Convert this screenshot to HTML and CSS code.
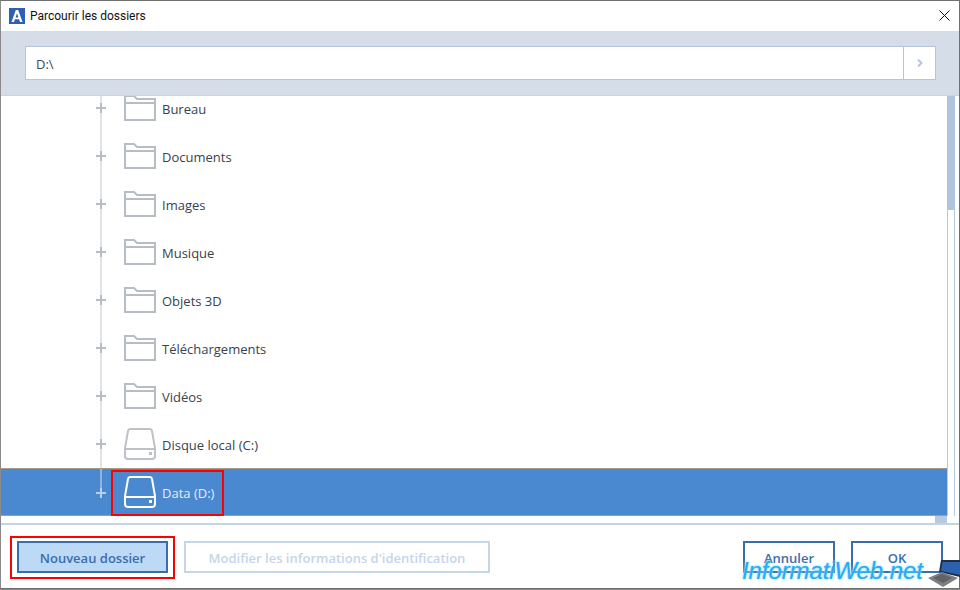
FILE: index.html
```html
<!DOCTYPE html>
<html lang="fr">
<head>
<meta charset="utf-8">
<title>Parcourir les dossiers</title>
<link rel="stylesheet" href="styles.css">
</head>
<body>
<svg class="defs" width="0" height="0" aria-hidden="true">
  <symbol id="folder" viewBox="0 0 32 26">
    <path d="M1 25V1H10L13 4H31V25ZM1 8H31" fill="none" stroke="currentColor" stroke-width="2"/>
  </symbol>
  <symbol id="drive" viewBox="0 0 32 32">
    <path d="M6.500 1H25.500Q27.500 1 28 3L31 20V28Q31 31 28 31H4Q1 31 1 28V20L4 3Q4.500 1 6.500 1ZM1 21H31" fill="none" stroke="currentColor" stroke-width="2"/>
    <rect x="25" y="24" width="3" height="3" fill="currentColor"/>
  </symbol>
</svg>
<div class="window">
  <header class="titlebar">
    <svg class="logo" viewBox="0 0 16 16" aria-hidden="true">
      <rect width="16" height="16" fill="#2d5fb4"/>
      <path d="M2.500 14L6.800 2H9.200L13.500 14H11L10.100 11.300H5.900L5 14ZM6.600 9.400H9.400L8 5.300Z" fill="#fff"/>
    </svg>
    <span class="title">Parcourir les dossiers</span>
    <svg class="close" viewBox="0 0 11 11" aria-hidden="true">
      <path d="M.5.500L10.500 10.500M10.500.500L.5 10.500" stroke="#111" stroke-width="1" fill="none"/>
    </svg>
  </header>
  <div class="pathband">
    <div class="pathbox">
      <span class="pathtext">D:\</span>
      <span class="pathgo">
        <svg viewBox="0 0 6 8" width="6" height="8" aria-hidden="true"><path d="M1 .5L4.500 4L1 7.500" fill="none" stroke="#b5c5dc" stroke-width="2"/></svg>
      </span>
    </div>
  </div>
  <div class="treearea">
    <div class="tree">
      <ul class="rows">
        <li class="row"><span class="plus"></span><svg class="ico folder"><use href="#folder"/></svg><span class="label">Bureau</span></li>
        <li class="row"><span class="plus"></span><svg class="ico folder"><use href="#folder"/></svg><span class="label">Documents</span></li>
        <li class="row"><span class="plus"></span><svg class="ico folder"><use href="#folder"/></svg><span class="label">Images</span></li>
        <li class="row"><span class="plus"></span><svg class="ico folder"><use href="#folder"/></svg><span class="label">Musique</span></li>
        <li class="row"><span class="plus"></span><svg class="ico folder"><use href="#folder"/></svg><span class="label">Objets 3D</span></li>
        <li class="row"><span class="plus"></span><svg class="ico folder"><use href="#folder"/></svg><span class="label">Téléchargements</span></li>
        <li class="row"><span class="plus"></span><svg class="ico folder"><use href="#folder"/></svg><span class="label">Vidéos</span></li>
        <li class="row"><span class="plus"></span><svg class="ico drive"><use href="#drive"/></svg><span class="label">Disque local (C:)</span></li>
        <li class="row selected"><span class="plus"></span><svg class="ico drive"><use href="#drive"/></svg><span class="label">Data (D:)</span><span class="redframe dataframe"></span></li>
      </ul>
    </div>
    <div class="vscroll"><div class="vthumb"></div></div>
  </div>
  <div class="hscroll"><div class="hthumb"></div></div>
  <footer class="footer">
    <button class="btn primary" type="button">Nouveau dossier<span class="redframe newframe"></span></button>
    <button class="btn disabled" type="button">Modifier les informations d'identification</button>
    <span class="spacer"></span>
    <button class="btn plain" type="button">Annuler</button>
    <button class="btn plain" type="button">OK</button>
  </footer>
</div>
<div class="bottomstrip"></div>
<div class="watermark">InformatiWeb.net</div>
<svg class="laptop" viewBox="0 0 32 30" aria-hidden="true">
  <path d="M13 1H32V18L11 13Z" fill="#1f2c44"/>
  <path d="M14.500 3H32V16L13 12Z" fill="#2a62b0"/>
  <path d="M0 19L14 13L30 19L15 28Z" fill="#7d7f82"/>
  <path d="M5 19L14 15L24 19L15 24Z" fill="#606265"/>
</svg>
</body>
</html>
```
FILE: styles.css
```css
html, body {
  margin: 0;
  padding: 0;
  height: 590px;
  overflow: hidden;
  background: #fff;
}
body {
  position: relative;
  font-family: "Open Sans", "Noto Sans", sans-serif;
  color: #3b4656;
}
.defs { position: absolute; }
.window {
  box-sizing: border-box;
  width: 960px;
  height: 589px;
  display: flex;
  flex-direction: column;
  background: #fff;
  border-top: 1px solid #6f6f6f;
  border-left: 1px solid #8a8a8a;
  border-right: 1px solid #6f6f6f;
  border-bottom: 1px solid #6f6f6f;
}
.titlebar {
  height: 30px;
  flex: none;
  display: flex;
  align-items: center;
  padding: 0 9px 0 8px;
}
.logo { width: 16px; height: 16px; flex: none; }
.title {
  margin-left: 5px;
  font-family: Roboto, "Liberation Sans", sans-serif;
  font-size: 12px;
  color: #111;
  flex: 1;
}
.close { width: 11px; height: 11px; flex: none; margin-bottom: 2px; }
.pathband {
  flex: none;
  height: 65px;
  box-sizing: border-box;
  padding: 15px 23px 0 24px;
  background: #d5dde8;
  border-bottom: 1px solid #c8d3e2;
}
.pathbox {
  box-sizing: border-box;
  height: 34px;
  display: flex;
  align-items: center;
  background: #fff;
  border: 1px solid #b5c5da;
}
.pathtext {
  flex: 1;
  padding: 1px 0 0 10px;
  font-size: 13px;
  color: #3b4656;
}
.pathgo {
  flex: none;
  box-sizing: border-box;
  width: 32px;
  height: 100%;
  display: flex;
  align-items: center;
  justify-content: center;
  border-left: 1px solid #b5c5da;
}
.treearea {
  flex: none;
  height: 420px;
  display: flex;
  overflow: hidden;
}
.tree {
  flex: none;
  width: 946px;
  height: 420px;
  overflow: hidden;
}
.rows {
  list-style: none;
  margin: -12px 0 0;
  padding: 0;
}
.row {
  position: relative;
  box-sizing: border-box;
  height: 48px;
  display: flex;
  align-items: center;
  padding-left: 123px;
  font-size: 13px;
  color: #38424f;
}
.label { padding-top: 2px; }
.row::before {
  content: "";
  position: absolute;
  left: 99px;
  top: 0;
  bottom: 0;
  width: 2px;
  background: #e0e4e8;
}
.row.selected::before {
  bottom: 24px;
  background: #8fb2de;
}
.plus {
  position: absolute;
  left: 95px;
  top: 23px;
  width: 10px;
  height: 2px;
  background: #b6bdc5;
}
.plus::after {
  content: "";
  position: absolute;
  left: 4px;
  top: -4px;
  width: 2px;
  height: 10px;
  background: #b6bdc5;
}
.selected .plus, .selected .plus::after { background: #b9cfea; }
.ico { flex: none; margin-right: 6px; width: 32px; color: #b6bdc4; }
.folder { height: 26px; }
.drive { height: 32px; color: #bcc2c8; }
.selected {
  background: #4a88d0;
  color: #e4edf8;
  border-top: 1px solid #a39a8c;
  border-bottom: 1px solid #8aa0bb;
}
.selected .ico { color: #fff; }
.vscroll {
  flex: none;
  box-sizing: border-box;
  width: 8px;
  height: 420px;
  border-left: 1px solid #b8c8dd;
  border-right: 1px solid #b8c8dd;
}
.vthumb {
  height: 114px;
  margin: 0 -1px;
  background: #b0c4de;
}
.hscroll {
  flex: none;
  position: relative;
  background: #fff;
  border-bottom: 2px solid #c5d2e4;
  height: 7px;
}
.hthumb {
  position: absolute;
  left: 934px;
  top: 0;
  width: 12px;
  height: 7px;
  background: #b8cae2;
}
.footer {
  flex: 1;
  display: flex;
  align-items: center;
  gap: 16px;
  padding: 1px 16px 0 16px;
}
.spacer { flex: 1; margin-left: -16px; }
.btn {
  position: relative;
  box-sizing: border-box;
  height: 32px;
  padding: 1px 0 0;
  background: #fff;
  font-family: "Open Sans", "Noto Sans", sans-serif;
  font-size: 13px;
  font-weight: 600;
}
.primary {
  width: 151px;
  background: #bcd9f6;
  border: 2px solid #3b6dab;
  color: #3b6dab;
}
.disabled {
  width: 306px;
  border: 2px solid #c5d6ea;
  color: #c5d6ea;
}
.plain {
  width: 92px;
  border: 2px solid #3b6dab;
  color: #3b6dab;
}
.redframe {
  position: absolute;
  box-sizing: border-box;
  border: 2px solid #f00;
  pointer-events: none;
}
.dataframe { left: 110px; top: 1px; width: 113px; height: 46px; }
.newframe { left: -9px; top: -7px; width: 165px; height: 43px; }
.bottomstrip {
  height: 1px;
  background: #8a8a8a;
}
.watermark {
  position: absolute;
  left: 742px;
  top: 556px;
  font-family: "Liberation Sans", Arial, sans-serif;
  font-style: italic;
  font-size: 24px;
  line-height: 30px;
  letter-spacing: -.1px;
  color: #28aaf4;
  text-shadow: 0 0 2px #7fd8ff, 0 0 3px #bfeaff;
}
.laptop {
  position: absolute;
  left: 928px;
  top: 559px;
  width: 32px;
  height: 30px;
}
```
